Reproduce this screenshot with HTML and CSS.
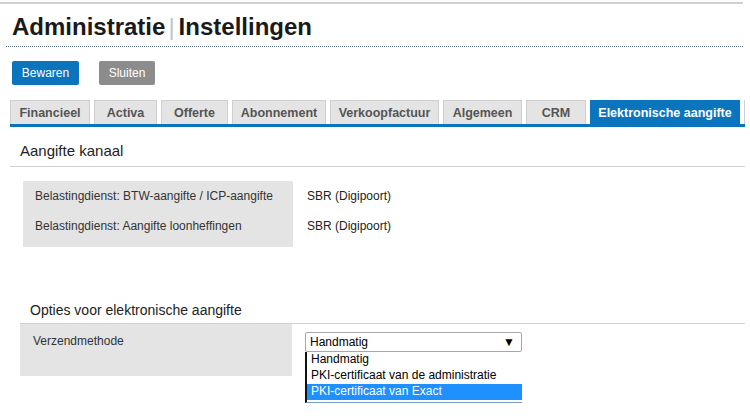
FILE: index.html
```html
<!DOCTYPE html>
<html lang="nl">
<head>
<meta charset="utf-8">
<title>Administratie | Instellingen</title>
<link rel="stylesheet" href="styles.css">
</head>
<body>
<div class="page">
  <div class="topline"></div>
  <h1 class="title">Administratie<span class="sep">|</span>Instellingen</h1>
  <div class="dotted"></div>
  <div class="actions">
    <button class="btn btn-primary">Bewaren</button>
    <button class="btn btn-secondary">Sluiten</button>
  </div>
  <div class="tabs">
    <div class="tab">Financieel</div>
    <div class="tab">Activa</div>
    <div class="tab">Offerte</div>
    <div class="tab">Abonnement</div>
    <div class="tab">Verkoopfactuur</div>
    <div class="tab">Algemeen</div>
    <div class="tab">CRM</div>
    <div class="tab active">Elektronische aangifte</div>
    <div class="tab tab-cut"></div>
  </div>
  <div class="section1">
    <div class="section-title s1">Aangifte kanaal</div>
    <div class="kv">
      <div class="labels">
        <div class="lbl">Belastingdienst: BTW-aangifte / ICP-aangifte</div>
        <div class="lbl">Belastingdienst: Aangifte loonheffingen</div>
      </div>
      <div class="values">
        <div class="val">SBR (Digipoort)</div>
        <div class="val">SBR (Digipoort)</div>
      </div>
    </div>
  </div>
  <div class="section2">
    <div class="section-title s2">Opties voor elektronische aangifte</div>
    <div class="row2">
      <div class="lbl2">Verzendmethode</div>
      <div class="selectwrap">
        <div class="select"><span>Handmatig</span><span class="arrow">▼</span></div>
        <div class="list">
          <div class="opt">Handmatig</div>
          <div class="opt">PKI-certificaat van de administratie</div>
          <div class="opt sel">PKI-certificaat van Exact</div>
        </div>
      </div>
    </div>
  </div>
</div>
</body>
</html>
```
FILE: styles.css
```css
* { box-sizing: border-box; }
html, body { margin: 0; padding: 0; background: #fff; }
body { font-family: "Liberation Sans", Arial, sans-serif; color: #222; width: 750px; height: 416px; overflow: hidden; }
.page { padding-top: 2px; }
.topline { height: 2px; background: #d0d0d0; width: 743px; }
.title { margin: 9px 0 0 12px; font-size: 24px; line-height: 27px; font-weight: bold; color: #1a1a1a; }
.sep { color: #b9c6d3; font-weight: normal; margin: 0 4px 0 3px; font-size: 24px; }
.dotted { margin: 6px 0 0 6px; width: 737px; border-top: 1px dotted #5a7080; }
.actions { display: flex; gap: 20px; margin: 14px 0 0 12px; }
.btn { border: none; border-radius: 2px; color: #fff; font-family: "Liberation Sans", Arial, sans-serif; font-size: 12px; height: 24px; padding: 0; }
.btn-primary { background: #0a74bd; width: 67px; }
.btn-secondary { background: #8c8c8c; width: 56px; }
.tabs { display: flex; gap: 4px; margin: 15px 0 0 10px; border-bottom: 3px solid #0a74bd; width: 735px; height: 27px; overflow: hidden; }
.tab { flex-shrink: 0; white-space: nowrap; height: 24px; background: #e4e4e4; border: 1px solid #cfcfcf; border-bottom: none; font-size: 12.5px; font-weight: bold; color: #555; display: flex; align-items: center; justify-content: center; padding: 0; }
.tab:nth-child(1) { width: 80px; }
.tab:nth-child(2) { width: 63px; }
.tab:nth-child(3) { width: 67px; }
.tab:nth-child(4) { width: 94px; }
.tab:nth-child(5) { width: 109px; }
.tab:nth-child(6) { width: 79px; }
.tab:nth-child(7) { width: 60px; }
.tab.active { width: 150px; background: #0a74bd; border-color: #0a74bd; color: #fff; }
.tab.tab-cut { width: 10px; }
.section-title { font-size: 15px; color: #222; }
.s1 { margin: 15px 0 0 20px; line-height: 18px; }
.kv { border-top: 1px solid #d0d0d0; margin: 6px 0 0 10px; width: 735px; padding: 14px 0 0 13px; display: flex; }
.labels { background: #e4e4e4; width: 270px; padding: 6px 0 5px 12px; }
.lbl { font-size: 12px; color: #333; height: 30px; line-height: 16px; padding-top: 1px; }
.lbl:last-child { height: 24px; }
.values { padding: 6px 0 0 14px; }
.val { font-size: 12px; color: #222; height: 30px; line-height: 16px; padding-top: 1px; }
.section2 { margin-top: 54px; }
.s2 { margin-left: 30px; font-size: 14px; line-height: 18px; }
.row2 { margin: 4px 0 0 20px; border-top: 1px solid #d0d0d0; width: 725px; display: flex; }
.lbl2 { background: #e4e4e4; width: 272px; height: 52px; font-size: 12px; color: #333; padding: 10px 0 0 13px; }
.selectwrap { margin: 8px 0 0 13px; width: 217px; }
.select { height: 20px; border: 1px solid #a7a7a7; border-radius: 2px; display: flex; justify-content: space-between; align-items: center; padding: 0 6px 0 4px; font-size: 12px; color: #000; }
.arrow { font-size: 12px; }
.list { border-left: 2px solid #111; border-bottom: 1px solid #7a9cd0; font-size: 12px; color: #000; padding-bottom: 2px; }
.opt { height: 16px; line-height: 15px; padding-left: 4px; }
.opt.sel { background: #1e90ff; color: #fff; }
```
